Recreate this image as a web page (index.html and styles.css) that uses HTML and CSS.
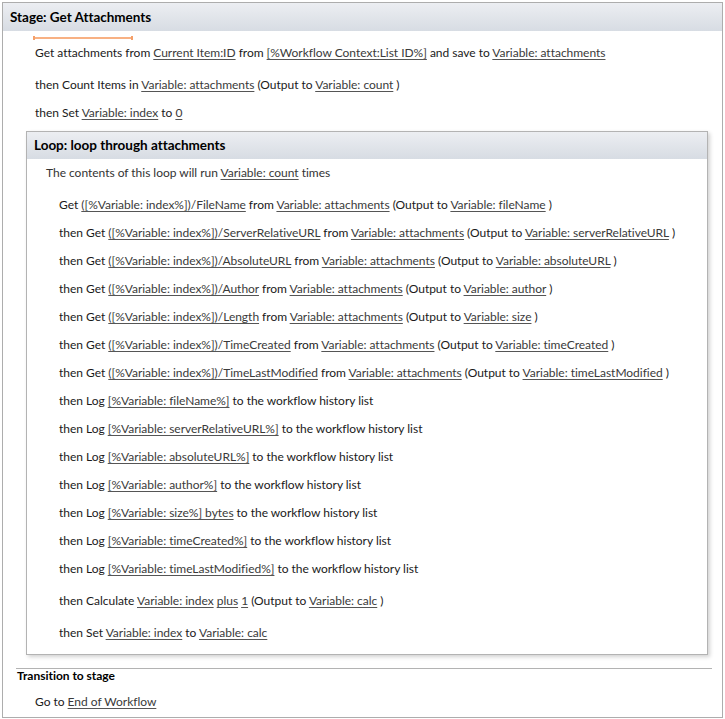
FILE: index.html
```html
<!DOCTYPE html>
<html>
<head>
<meta charset="utf-8">
<link rel="stylesheet" href="styles.css">
</head>
<body>
<div class="stage">
  <div class="stage-header">Stage: Get Attachments</div>
  <div class="stage-body">
    <div class="marker"></div>
    <div class="row step first">Get attachments from <a>Current Item:ID</a> from <a>[%Workflow Context:List ID%]</a> and save to <a>Variable: attachments</a></div>
    <div class="row step gap">then Count Items in <a>Variable: attachments</a> (Output to <a>Variable: count</a> )</div>
    <div class="row step">then Set <a>Variable: index</a> to <a>0</a></div>

    <div class="loop">
      <div class="loop-header">Loop: loop through attachments</div>
      <div class="loop-intro">The contents of this loop will run <a>Variable: count</a> times</div>
      <div class="loop-body">
        <div class="row">Get <a>([%Variable: index%])/FileName</a> from <a>Variable: attachments</a> (Output to <a>Variable: fileName</a> )</div>
        <div class="row">then Get <a>([%Variable: index%])/ServerRelativeURL</a> from <a>Variable: attachments</a> (Output to <a>Variable: serverRelativeURL</a> )</div>
        <div class="row">then Get <a>([%Variable: index%])/AbsoluteURL</a> from <a>Variable: attachments</a> (Output to <a>Variable: absoluteURL</a> )</div>
        <div class="row">then Get <a>([%Variable: index%])/Author</a> from <a>Variable: attachments</a> (Output to <a>Variable: author</a> )</div>
        <div class="row">then Get <a>([%Variable: index%])/Length</a> from <a>Variable: attachments</a> (Output to <a>Variable: size</a> )</div>
        <div class="row">then Get <a>([%Variable: index%])/TimeCreated</a> from <a>Variable: attachments</a> (Output to <a>Variable: timeCreated</a> )</div>
        <div class="row">then Get <a>([%Variable: index%])/TimeLastModified</a> from <a>Variable: attachments</a> (Output to <a>Variable: timeLastModified</a> )</div>
        <div class="row">then Log <a>[%Variable: fileName%]</a> to the workflow history list</div>
        <div class="row">then Log <a>[%Variable: serverRelativeURL%]</a> to the workflow history list</div>
        <div class="row">then Log <a>[%Variable: absoluteURL%]</a> to the workflow history list</div>
        <div class="row">then Log <a>[%Variable: author%]</a> to the workflow history list</div>
        <div class="row">then Log <a>[%Variable: size%] bytes</a> to the workflow history list</div>
        <div class="row">then Log <a>[%Variable: timeCreated%]</a> to the workflow history list</div>
        <div class="row">then Log <a>[%Variable: timeLastModified%]</a> to the workflow history list</div>
        <div class="row gap">then Calculate <a>Variable: index</a> <a>plus</a> <a>1</a> (Output to <a>Variable: calc</a> )</div>
        <div class="row gap">then Set <a>Variable: index</a> to <a>Variable: calc</a></div>
      </div>
    </div>

    <div class="transition">
      <div class="transition-title">Transition to stage</div>
      <div class="row goto">Go to <a>End of Workflow</a></div>
    </div>
  </div>
</div>
</body>
</html>
```

FILE: styles.css
```css
* { box-sizing: border-box; }
html, body { margin: 0; padding: 0; background: #fff; }
body {
  font-family: "Lato", "Liberation Sans", sans-serif;
  font-size: 12px;
  letter-spacing: -0.02px;
  color: #1a1a1a;
}
a {
  color: #3a3a3a;
  text-decoration: underline;
  text-decoration-color: #555;
  text-underline-offset: 2px;
}
.stage {
  margin: 2px 0 0 2px;
  width: 721px;
  height: 716px;
  border: 1px solid #adadad;
}
.stage-header {
  height: 28px;
  line-height: 28px;
  padding-left: 7px;
  font-weight: 700;
  font-size: 13.5px;
  color: #000;
  background: linear-gradient(#eceef2, #d7dce3);
}
.stage-body {
  padding-left: 30px;
  padding-top: 6px;
}
.marker {
  position: relative;
  width: 100px;
  height: 2px;
  background: #f8b183;
}
.marker::before, .marker::after {
  content: "";
  position: absolute;
  top: -1px;
  width: 2px;
  height: 4px;
  background: #f5a06a;
}
.marker::before { left: 0; }
.marker::after { right: 0; }
.row {
  height: 28px;
  line-height: 28px;
  white-space: nowrap;
}
.step { margin-left: 2px; }
.gap { margin-top: 4px; }
.loop {
  margin: 4px 0 0 -7px;
  width: 682px;
  height: 524px;
  border: 1px solid #b3b3b3;
  box-shadow: 2px 2px 4px rgba(0,0,0,0.18);
}
.loop-header {
  height: 27px;
  line-height: 27px;
  padding-left: 7px;
  font-weight: 700;
  font-size: 13.5px;
  color: #000;
  background: linear-gradient(#eceef2, #d7dce3);
}
.loop-intro {
  height: 28px;
  line-height: 28px;
  padding-left: 19px;
  color: #333;
}
.loop-body {
  padding-left: 32px;
  padding-top: 4px;
}
.transition {
  margin: 13px 0 0 -17px;
  width: 696px;
  border-top: 1px solid #b3b3b3;
}
.transition-title {
  height: 14px;
  line-height: 14px;
  font-weight: 700;
  color: #000;
  padding-left: 1px;
}
.goto {
  margin-top: 5px;
  padding-left: 19px;
}
```
